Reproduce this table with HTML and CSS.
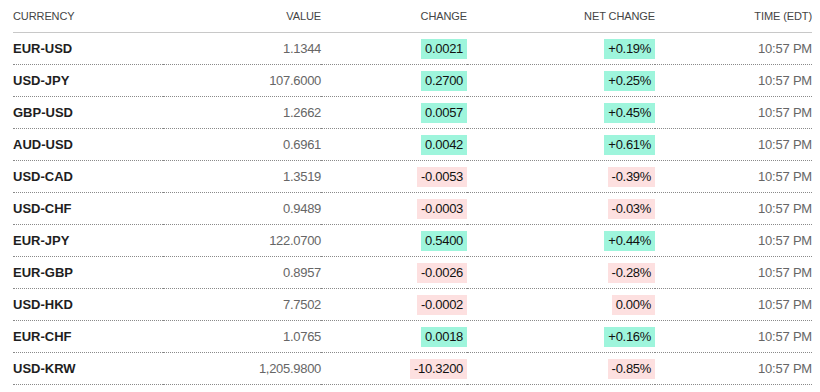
FILE: index.html
```html
<!DOCTYPE html>
<html>
<head>
<meta charset="utf-8">
<link rel="stylesheet" href="styles.css">
</head>
<body>
<div class="wrap">
<table class="fx">
  <colgroup>
    <col class="c-cur"><col class="c-val"><col class="c-chg"><col class="c-net"><col class="c-time">
  </colgroup>
  <thead>
    <tr><th class="left">CURRENCY</th><th>VALUE</th><th>CHANGE</th><th>NET CHANGE</th><th>TIME (EDT)</th></tr>
  </thead>
  <tbody>
    <tr><td class="cur">EUR-USD</td><td class="val">1.1344</td><td><span class="badge up">0.0021</span></td><td><span class="badge up">+0.19%</span></td><td class="time">10:57 PM</td></tr>
    <tr><td class="cur">USD-JPY</td><td class="val">107.6000</td><td><span class="badge up">0.2700</span></td><td><span class="badge up">+0.25%</span></td><td class="time">10:57 PM</td></tr>
    <tr><td class="cur">GBP-USD</td><td class="val">1.2662</td><td><span class="badge up">0.0057</span></td><td><span class="badge up">+0.45%</span></td><td class="time">10:57 PM</td></tr>
    <tr><td class="cur">AUD-USD</td><td class="val">0.6961</td><td><span class="badge up">0.0042</span></td><td><span class="badge up">+0.61%</span></td><td class="time">10:57 PM</td></tr>
    <tr><td class="cur">USD-CAD</td><td class="val">1.3519</td><td><span class="badge down">-0.0053</span></td><td><span class="badge down">-0.39%</span></td><td class="time">10:57 PM</td></tr>
    <tr><td class="cur">USD-CHF</td><td class="val">0.9489</td><td><span class="badge down">-0.0003</span></td><td><span class="badge down">-0.03%</span></td><td class="time">10:57 PM</td></tr>
    <tr><td class="cur">EUR-JPY</td><td class="val">122.0700</td><td><span class="badge up">0.5400</span></td><td><span class="badge up">+0.44%</span></td><td class="time">10:57 PM</td></tr>
    <tr><td class="cur">EUR-GBP</td><td class="val">0.8957</td><td><span class="badge down">-0.0026</span></td><td><span class="badge down">-0.28%</span></td><td class="time">10:57 PM</td></tr>
    <tr><td class="cur">USD-HKD</td><td class="val">7.7502</td><td><span class="badge down">-0.0002</span></td><td><span class="badge down">0.00%</span></td><td class="time">10:57 PM</td></tr>
    <tr><td class="cur">EUR-CHF</td><td class="val">1.0765</td><td><span class="badge up">0.0018</span></td><td><span class="badge up">+0.16%</span></td><td class="time">10:57 PM</td></tr>
    <tr><td class="cur">USD-KRW</td><td class="val">1,205.9800</td><td><span class="badge down">-10.3200</span></td><td><span class="badge down">-0.85%</span></td><td class="time">10:57 PM</td></tr>
  </tbody>
</table>
</div>
</body>
</html>
```

FILE: styles.css
```css
html, body {
  margin: 0;
  padding: 0;
  background: #fff;
}
body {
  font-family: "Liberation Sans", Arial, sans-serif;
  color: #222;
}
.wrap {
  padding: 0 8px 0 13px;
}
.fx {
  width: 799px;
  border-collapse: collapse;
  table-layout: fixed;
}
.c-cur { width: 150px; }
.c-val { width: 158px; }
.c-chg { width: 146px; }
.c-net { width: 188px; }
.c-time { width: 157px; }

.fx th {
  height: 32px;
  padding: 0;
  font-size: 11px;
  font-weight: normal;
  color: #444;
  text-align: right;
  vertical-align: middle;
  border-bottom: 1px solid #c8c8c8;
  letter-spacing: -0.1px;
}
.fx th.left { text-align: left; }
.fx td {
  height: 31px;
  padding: 0;
  font-size: 13px;
  text-align: right;
  vertical-align: middle;
  border-bottom: 1px dotted #8a8a8a;
  letter-spacing: -0.3px;
}
.fx td.cur {
  text-align: left;
  font-weight: bold;
  color: #1e1e1e;
  letter-spacing: 0;
}
.fx td.val { color: #666; }
.fx td.time { color: #666; letter-spacing: -0.2px; }
.badge {
  display: inline-block;
  height: 20px;
  line-height: 20px;
  padding: 0 4px;
  color: #111;
}
.badge.up { background: #9ef5dc; }
.badge.down { background: #fde0e0; }
```
